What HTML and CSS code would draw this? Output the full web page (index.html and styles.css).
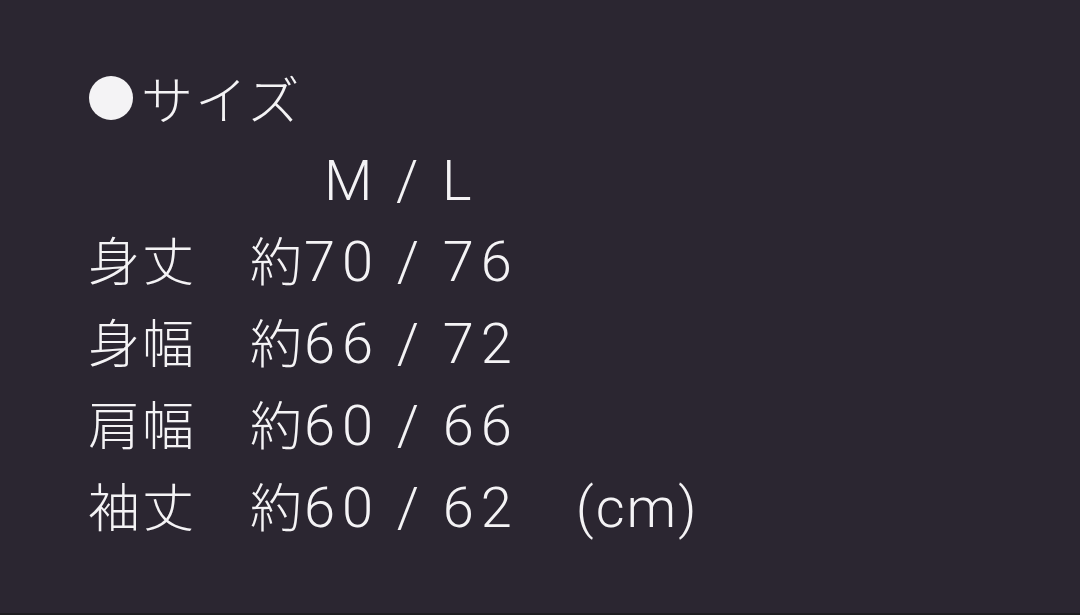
FILE: index.html
```html
<!DOCTYPE html>
<html lang="ja">
  <head>
    <meta charset="utf-8" />
    <meta name="viewport" content="width=device-width, initial-scale=1" />
    <title>サイズ</title>
    <link rel="stylesheet" href="styles.css">
  </head>
  <body>
    <main class="sheet">
      <h2 class="heading"><span class="dot"></span>サイズ</h2>
      <div class="row head-row">
        <span class="label"></span>
        <span class="value sizes">M / L</span>
      </div>
      <div class="row">
        <span class="label">身丈</span>
        <span class="value">約<span class="num">70 / 76</span></span>
      </div>
      <div class="row">
        <span class="label">身幅</span>
        <span class="value">約<span class="num">66 / 72</span></span>
      </div>
      <div class="row">
        <span class="label">肩幅</span>
        <span class="value">約<span class="num">60 / 66</span></span>
      </div>
      <div class="row">
        <span class="label">袖丈</span>
        <span class="value">約<span class="num">60 / 62</span><span class="unit">(cm)</span></span>
      </div>
    </main>
  </body>
</html>
```

FILE: styles.css
```css
* {
  box-sizing: border-box;
}
html,
body {
  height: 100%;
}
body {
  margin: 0;
  background: #2b2631;
  color: #f4f3f5;
  font-family: "Noto Sans CJK JP", "Noto Sans", sans-serif;
  font-weight: 300;
  border-bottom: 2px solid #1e1d20;
}
.sheet {
  padding: 56px 0 0 88px;
  font-size: 52px;
  line-height: 82px;
}
.heading {
  display: flex;
  align-items: center;
  height: 84px;
  margin: 0;
  font-size: 52px;
  font-weight: 300;
  letter-spacing: 2px;
}
.dot {
  width: 44px;
  height: 44px;
  margin: 0 8px 0 1px;
  border-radius: 50%;
  background: #f4f3f5;
}
.row {
  display: flex;
  align-items: baseline;
  height: 82px;
}
.head-row {
  height: 78px;
}
.label {
  width: 162px;
  letter-spacing: 2px;
}
.value {
  display: flex;
  align-items: baseline;
}

/* latin part: numbers, sizes, unit */
.num,
.sizes,
.unit {
  font-family: Roboto, "Liberation Sans", sans-serif;
  font-weight: 300;
  font-size: 56px;
  line-height: 82px;
  white-space: pre;
}
.num {
  margin-left: 2px;
  letter-spacing: 7px;
  word-spacing: -4px;
}
.sizes {
  padding-left: 74px;
  letter-spacing: 7px;
  word-spacing: -4px;
}
.unit {
  margin-left: 57px;
  letter-spacing: 2px;
}
```
